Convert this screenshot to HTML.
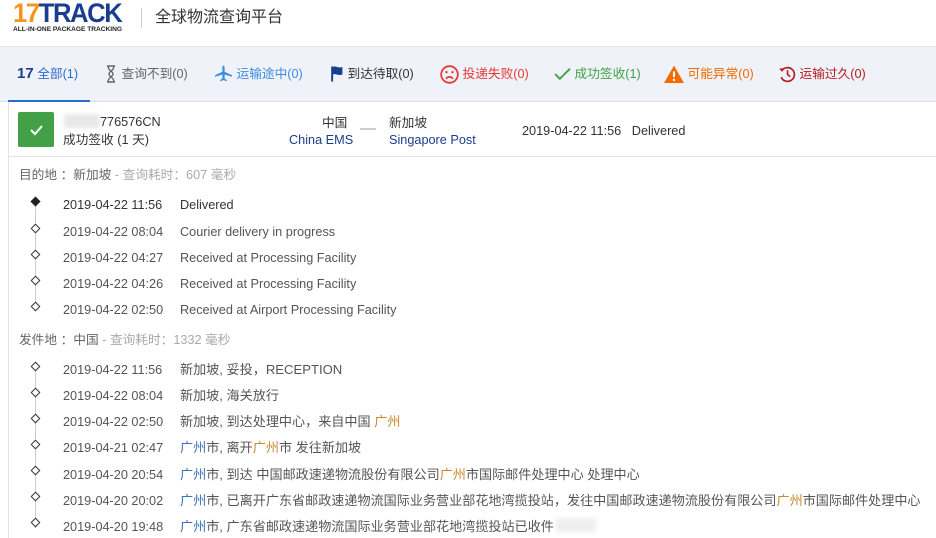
<!DOCTYPE html>
<html><head><meta charset="utf-8"><style>
*{margin:0;padding:0;box-sizing:border-box}
body{width:936px;height:538px;overflow:hidden;background:#fff;font-family:"Liberation Sans","Noto Sans CJK SC",sans-serif;font-size:12.7px;line-height:16px;color:#333;position:relative}
.hdr{position:absolute;left:0;top:0;width:936px;height:47px;background:#fff;border-bottom:1px solid #e3e5ea}
.logo{position:absolute;left:13px;top:-2px;font-weight:bold;font-size:27px;line-height:30px;letter-spacing:-1.5px;color:#1b3d8f;transform:scaleX(0.95);transform-origin:left}
.logo b{color:#f7941d}
.sub{position:absolute;left:13px;top:26px;font-size:6.6px;line-height:8px;font-weight:bold;color:#222;letter-spacing:0}
.vsep{position:absolute;left:141px;top:8px;width:1px;height:20px;background:#ccc}
.title{position:absolute;left:155px;top:8px;font-size:16px;line-height:20px;color:#333}
.tabs{position:absolute;left:0;top:47px;width:936px;height:55px;background:#eff2f9;border-bottom:1px solid #dcdfe6}
.tab{position:absolute;top:18px;white-space:nowrap;height:18px;line-height:18px}
.tab svg{vertical-align:top}
.ul{position:absolute;left:8px;top:100px;width:82px;height:2px;background:#2b6ad1}
.lb{position:absolute;left:8px;top:102px;width:1px;height:436px;background:#e0e3ea}
.card{position:absolute;left:9px;top:103px;width:927px;height:54px;border-bottom:1px solid #e3e5ea}
.g{position:absolute;left:18px;top:112px;width:36px;height:35px;background:#43a047;border-radius:2px}
.row{position:absolute;left:0;width:936px;white-space:nowrap;height:16px}
.d{position:absolute;left:63px;color:#555}
.t{position:absolute;left:180px;color:#555}
.cn .t{font-size:13.1px}
.dm{position:absolute;left:32px;width:7px;height:7px;border:1px solid #333;transform:rotate(45deg);background:#fff}
.vl{position:absolute;left:35px;width:1px;background:#ccc}
.h{position:absolute;left:19px;color:#666}
.h span{color:#aaa}
.o{color:#c8892b}.bl{color:#3a72b8}
</style></head><body>
<div class="hdr">
<div class="logo"><b>17</b>TRACK</div>
<div class="sub">ALL-IN-ONE PACKAGE TRACKING</div>
<div class="vsep"></div>
<div class="title">全球物流查询平台</div>
</div>
<div class="tabs">
<div class="tab" style="left:17px;color:#2b6ad1"><b style="color:#1b3d8f;font-size:15px">17</b> 全部(1)</div>
<div class="tab" style="left:104px;color:#666"><svg width="14" height="18" viewBox="0 0 14 18"><path d="M3 1h8M3 17h8M4 1c0 5 5 5 5 8S4 12 4 17M10 1c0 5-5 5-5 8s5 3 5 8" stroke="#666" fill="none" stroke-width="1.4"/></svg> 查询不到(0)</div>
<div class="tab" style="left:214px;color:#3b8ee0"><svg width="19" height="18" viewBox="0 0 17 16"><path d="M8.5 0.5c1 0 1 1.5 1 2.5v3l6.5 3v1.5l-6.5-2v3.5l2 1.5v1l-3-1-3 1v-1l2-1.5V8.5L1 10.5V9l6.5-3V3c0-1 0-2.5 1-2.5z" fill="#3b8ee0"/></svg> 运输途中(0)</div>
<div class="tab" style="left:330px;color:#333"><svg width="14" height="18" viewBox="0 0 13 16"><path d="M2 1v14" stroke="#1b3d8f" stroke-width="1.8"/><path d="M2.5 1.5c3-1.5 5 1.5 9 0v7c-4 1.5-6-1.5-9 0z" fill="#1b3d8f"/></svg> 到达待取(0)</div>
<div class="tab" style="left:440px;color:#e53935"><svg width="19" height="19" viewBox="0 0 16 16"><circle cx="8" cy="8" r="7" stroke="#e53935" stroke-width="1.5" fill="none"/><circle cx="5.5" cy="6" r="1" fill="#e53935"/><circle cx="10.5" cy="6" r="1" fill="#e53935"/><path d="M5 11.5c2-2 4-2 6 0" stroke="#e53935" stroke-width="1.4" fill="none"/></svg> 投递失败(0)</div>
<div class="tab" style="left:554px;color:#43a047"><svg width="17" height="18" viewBox="0 0 16 16"><path d="M1 8l4.5 4.5L15 3" stroke="#43a047" stroke-width="1.8" fill="none"/></svg> 成功签收(1)</div>
<div class="tab" style="left:664px;color:#f26a00"><svg width="20" height="18" viewBox="0 0 19 17"><path d="M9.5 0.5L19 17H0z" fill="#f26a00"/><path d="M9.5 6v5.5M9.5 13v2" stroke="#fff" stroke-width="2"/></svg> 可能异常(0)</div>
<div class="tab" style="left:778px;color:#b71c1c"><svg width="18" height="18" viewBox="0 0 17 16"><path d="M3.5 5A6.5 6.5 0 1 1 3 11" stroke="#b71c1c" stroke-width="1.6" fill="none"/><path d="M1 3l3 3 2-3.5z" fill="#b71c1c"/><path d="M9 4.5v4l2.5 2" stroke="#b71c1c" stroke-width="1.5" fill="none"/></svg> 运输过久(0)</div>
</div>
<div class="ul"></div>
<div class="lb"></div>
<div class="card"></div>
<div class="g"><svg width="36" height="35" viewBox="0 0 36 35"><path d="M13 18l4 4 7-8" stroke="#fff" stroke-width="2" fill="none"/></svg></div>
<div style="position:absolute;left:64px;top:114px;width:36px;height:14px;background:#e8e8e8;filter:blur(2px)"></div>
<div style="position:absolute;left:100px;top:114px;color:#333">776576CN</div>
<div style="position:absolute;left:63px;top:132px;color:#333">成功签收 (1 天)</div>
<div style="position:absolute;left:322px;top:115px;color:#333">中国</div>
<div style="position:absolute;left:289px;top:132px;color:#1b3d8f">China EMS</div>
<div style="position:absolute;left:360px;top:128px;width:16px;height:2px;background:#ccc"></div>
<div style="position:absolute;left:389px;top:115px;color:#333">新加坡</div>
<div style="position:absolute;left:389px;top:132px;color:#1b3d8f">Singapore Post</div>
<div style="position:absolute;left:522px;top:123px;color:#333;white-space:nowrap">2019-04-22 11:56&nbsp;&nbsp;&nbsp;Delivered</div>

<div class="h" style="top:167px">目的地 ：新加坡 <span>- 查询耗时：607 毫秒</span></div>
<div class="vl" style="top:204px;height:104px"></div>
<div class="dm" style="top:198px;background:#222;border-color:#222"></div>
<div class="row" style="top:197px"><span class="d" style="color:#333">2019-04-22 11:56</span><span class="t" style="color:#333">Delivered</span></div>
<div class="dm" style="top:225px"></div>
<div class="row" style="top:224px"><span class="d">2019-04-22 08:04</span><span class="t">Courier delivery in progress</span></div>
<div class="dm" style="top:251px"></div>
<div class="row" style="top:250px"><span class="d">2019-04-22 04:27</span><span class="t">Received at Processing Facility</span></div>
<div class="dm" style="top:277px"></div>
<div class="row" style="top:276px"><span class="d">2019-04-22 04:26</span><span class="t">Received at Processing Facility</span></div>
<div class="dm" style="top:303px"></div>
<div class="row" style="top:302px"><span class="d">2019-04-22 02:50</span><span class="t">Received at Airport Processing Facility</span></div>

<div class="h" style="top:332px">发件地 ：中国 <span>- 查询耗时：1332 毫秒</span></div>
<div class="vl" style="top:368px;height:160px"></div>
<div class="dm" style="top:363px"></div>
<div class="row cn" style="top:362px"><span class="d">2019-04-22 11:56</span><span class="t">新加坡, 妥投，RECEPTION</span></div>
<div class="dm" style="top:389px"></div>
<div class="row cn" style="top:388px"><span class="d">2019-04-22 08:04</span><span class="t">新加坡, 海关放行</span></div>
<div class="dm" style="top:415px"></div>
<div class="row cn" style="top:414px"><span class="d">2019-04-22 02:50</span><span class="t">新加坡, 到达处理中心，来自中国 <span class="o">广州</span></span></div>
<div class="dm" style="top:441px"></div>
<div class="row cn" style="top:440px"><span class="d">2019-04-21 02:47</span><span class="t"><span class="bl">广州</span>市, 离开<span class="o">广州</span>市 发往新加坡</span></div>
<div class="dm" style="top:467px"></div>
<div class="row cn" style="top:467px"><span class="d">2019-04-20 20:54</span><span class="t"><span class="bl">广州</span>市, 到达 中国邮政速递物流股份有限公司<span class="o">广州</span>市国际邮件处理中心 处理中心</span></div>
<div class="dm" style="top:493px"></div>
<div class="row cn" style="top:493px"><span class="d">2019-04-20 20:02</span><span class="t"><span class="bl">广州</span>市, 已离开广东省邮政速递物流国际业务营业部花地湾揽投站，发往中国邮政速递物流股份有限公司<span class="o">广州</span>市国际邮件处理中心</span></div>
<div class="dm" style="top:519px"></div>
<div class="row cn" style="top:519px"><span class="d">2019-04-20 19:48</span><span class="t"><span class="bl">广州</span>市, 广东省邮政速递物流国际业务营业部花地湾揽投站已收件</span></div>
<div style="position:absolute;left:556px;top:518px;width:40px;height:14px;background:#eee;filter:blur(2px)"></div>
</body></html>
